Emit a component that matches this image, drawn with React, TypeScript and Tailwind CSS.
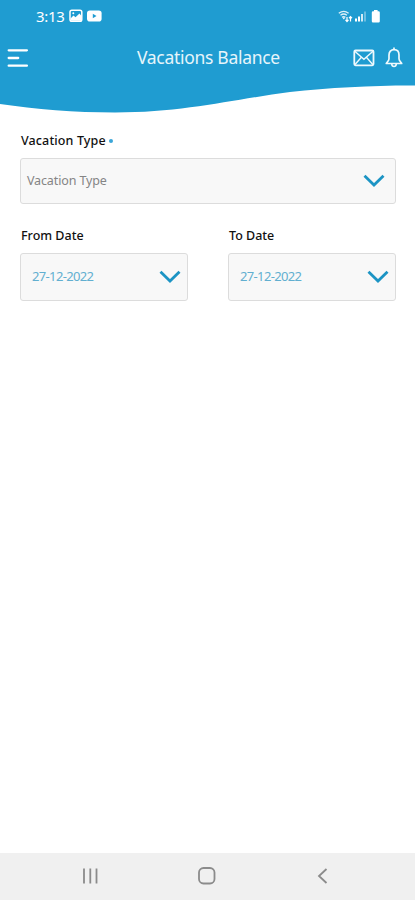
import type { ReactNode } from "react";

const BLUE = "#1f9cd1";

const StatusBar = () => {
  return (
    <div className="flex h-8 items-center pl-[36px] pr-[34px] text-white">
      <span className="w-[33px] whitespace-nowrap text-[15px] leading-8 tracking-[-0.3px]">3:13</span>
      <svg width="14" height="14" viewBox="0 0 14 14" fill="none">
        <rect x="1" y="1.2" width="11.8" height="11" rx="1.8" stroke="white" strokeWidth="1.5" />
        <path d="M1.5 9.5l3-3 2 1.8 4-3.8 2 2.5v3.5a1.3 1.3 0 0 1-1.3 1.3H2.8a1.3 1.3 0 0 1-1.3-1.3z" fill="white" />
        <circle cx="4.3" cy="4.3" r="1" fill="white" />
      </svg>
      <svg className="ml-[4px]" width="15" height="12" viewBox="0 0 15 12">
        <rect x="0" y="0.5" width="14.6" height="11" rx="2.8" fill="white" />
        <path d="M5.8 3.8l3.7 2.2-3.7 2.2z" fill={BLUE} />
      </svg>

      {/* Wifi, signal and battery */}
      <svg className="ml-auto" width="15" height="13" viewBox="0 0 15 13" fill="none">
        <path d="M0.8 3.3c3-2.4 6.8-2.4 9.8 0M2.5 5.3c2-1.6 4.4-1.6 6.4 0M4 7.3c1.1-.9 2.3-.9 3.4 0" stroke="white" strokeOpacity="0.85" strokeWidth="1.3" />
        <path d="M4.3 7.5h3l-1.5 2z" fill="white" />
        <path d="M9 7v4.300M7.500 9.800L9 11.500l1.500-1.700M12.500 11.500V6.700M11 8.200l1.500-1.600 1.500 1.600" stroke="white" strokeWidth="1.2" />
      </svg>
      <svg className="ml-[2px]" width="12" height="12" viewBox="0 0 12 12" fill="white">
        <rect x="0" y="8.5" width="2" height="3" />
        <rect x="3" y="6.5" width="2" height="5" />
        <rect x="6" y="4" width="2" height="7.5" opacity="0.8" />
        <rect x="9" y="1.5" width="2" height="10" opacity="0.35" />
      </svg>
      <svg className="ml-[4px]" width="10" height="13" viewBox="0 0 10 13" fill="white">
        <path d="M3 0h3.6v1.3h1a1.2 1.2 0 0 1 1.2 1.2v8.8a1.2 1.2 0 0 1-1.2 1.2H2A1.2 1.2 0 0 1 .8 11.3V2.5A1.2 1.2 0 0 1 2 1.3h1z" />
      </svg>
    </div>
  );
};

const Header = () => {
  return (
    <header>
      <div className="h-[84px] bg-[#1f9cd1]">
        <StatusBar />
        <div className="flex h-[51px] items-center pl-[7px] pr-[12px]">
          <button aria-label="Menu" className="w-[130px]">
            <svg width="22" height="20" viewBox="0 0 22 20" stroke="white" strokeWidth="2.3" strokeLinecap="round">
              <path d="M1.700 2.300h18.200M1.700 10h9.500M1.700 17.700h18.200" />
            </svg>
          </button>
          <h1 className="whitespace-nowrap text-[17.5px] leading-[51px] tracking-[-0.3px] text-[#e6f5fb]">
            Vacations Balance
          </h1>
          <div className="ml-auto flex items-center gap-[10px]">
            <svg width="22" height="18" viewBox="0 0 22 18" fill="none" stroke="#eef9fd" strokeWidth="1.8">
              <rect x="1.3" y="1.5" width="19.2" height="14.8" rx="1.2" />
              <path d="M1.8 2.3l9.1 8 9.1-8M1.8 15.7l6.600-7.400M20 15.700l-6.600-7.400" strokeWidth="1.4" />
            </svg>
            <svg width="18" height="21" viewBox="0 0 18 21" fill="none" stroke="#eef9fd" strokeWidth="1.7" strokeLinejoin="round">
              <path d="M9 .5v2.200M9 2.700c-3.100 0-5 2.200-5 5.200v3.800c0 1.900-1.300 2.800-2.700 4.800h15.400c-1.400-2-2.700-2.900-2.700-4.800V7.900c0-3-1.900-5.200-5-5.200z" />
              <path d="M6.700 17c.2 1.700 1.100 2.500 2.300 2.500s2.100-.8 2.300-2.500" />
            </svg>
          </div>
        </div>
      </div>
      <svg className="block" width="415" height="30" viewBox="0 0 415 30">
        <path d="M0 0H415V1.400C375 1.200 330 3.500 290 8C235 15 185 28.500 115 28.500C75 28.500 35 25 0 20Z" fill={BLUE} />
      </svg>
    </header>
  );
};

const Chevron = () => (
  <svg width="22" height="14" viewBox="0 0 22 14" fill="none" stroke="#1c94c4" strokeWidth="2.800">
    <path d="M1.500 1.700l9.500 9.300 9.500-9.300" />
  </svg>
);

const Label = ({ children }: { children: ReactNode }) => (
  <div className="flex items-center whitespace-nowrap pl-px text-[12.5px] font-medium leading-[18px] text-[#111]">
    {children}
  </div>
);

const DateField = ({ label, value }: { label: string; value: string }) => {
  return (
    <div className="w-[168px]">
      <Label>{label}</Label>
      <button className="mt-[8px] flex h-[48px] w-full items-center justify-between rounded-[3px] border border-[#dcdcdc] bg-[#f8f8f8] pl-[11px] pr-[6px]">
        <span className="text-[13px] tracking-[-0.65px] text-[#62afd0]">{value}</span>
        <Chevron />
      </button>
    </div>
  );
};

const App = () => {
  return (
    <div className="flex h-[900px] w-[415px] flex-col bg-white font-['Noto_Sans',sans-serif]">
      <Header />

      {/* Filters */}
      <main className="flex-1 pl-[20px] pr-[19px] pt-[18px]">
        <Label>
          <span className="tracking-[0.13px]">Vacation Type</span>
          <span className="ml-[3px] h-[4px] w-[4px] rounded-full bg-[#3aa6d8]" />
        </Label>
        <button className="mt-[8px] flex h-[46px] w-full items-center justify-between rounded-[3px] border border-[#dcdcdc] bg-[#f8f8f8] pl-[6px] pr-[10px]">
          <span className="pt-px text-[12.5px] tracking-[-0.13px] text-[#858585]">Vacation Type</span>
          <Chevron />
        </button>
        <div className="mt-[23px] flex justify-between">
          <DateField label="From Date" value="27-12-2022" />
          <DateField label="To Date" value="27-12-2022" />
        </div>
      </main>

      {/* Android navigation */}
      <nav className="flex h-[47px] items-center justify-between bg-[#f0f0f0] pb-[2px] pl-[81px] pr-[86px]">
        <svg width="18" height="18" viewBox="0 0 18 18" stroke="#8b8b8b" strokeWidth="1.8">
          <path d="M3 1.500v15M9.300 1.500v15M15.500 1.500v15" />
        </svg>
        <svg width="20" height="20" viewBox="0 0 20 20" fill="none" stroke="#8b8b8b" strokeWidth="1.8">
          <rect x="2" y="2" width="15.500" height="15.500" rx="4.500" />
        </svg>
        <svg width="14" height="18" viewBox="0 0 14 18" fill="none" stroke="#8b8b8b" strokeWidth="1.8">
          <path d="M11.500 2L4 9l7.500 7" />
        </svg>
      </nav>
    </div>
  );
};

export default App;
